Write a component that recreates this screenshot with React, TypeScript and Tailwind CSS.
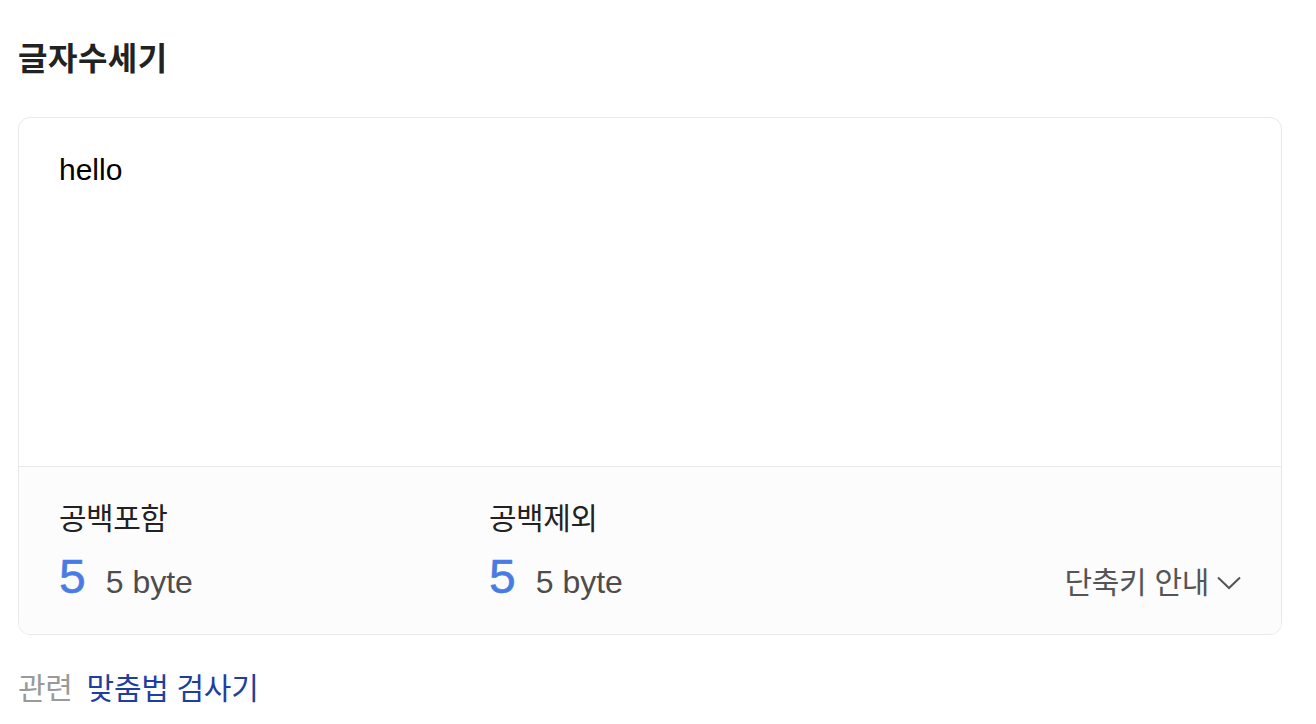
import { useState } from "react";

const font = "font-['Liberation_Sans','Noto_Sans_CJK_KR',sans-serif]";

type Stat = {
  label: string;
  count: number;
  bytes: number;
};

const StatBlock = ({ stat }: { stat: Stat }) => (
  <div className="w-[430px] flex flex-col">
    <div className="text-[30px] leading-[38px] tracking-[-0.5px] text-[#222]">
      {stat.label}
    </div>
    <div className="flex items-baseline mt-[15px]">
      <span className="text-[48px] leading-none text-[#4a7be3] [-webkit-text-stroke:0.6px_#4a7be3]">
        {stat.count}
      </span>
      <span className="ml-[20px] text-[32px] leading-none text-[#4d4d4d]">
        {stat.bytes} byte
      </span>
    </div>
  </div>
);

export default function App() {
  const [text, setText] = useState("hello");

  // 바이트 계산 (한글 2byte 기준)
  const bytesOf = (s: string) =>
    Array.from(s).reduce((n, c) => n + (c.charCodeAt(0) > 127 ? 2 : 1), 0);
  const noSpace = text.replace(/\s/g, "");

  const stats: Stat[] = [
    { label: "공백포함", count: text.length, bytes: bytesOf(text) },
    { label: "공백제외", count: noSpace.length, bytes: bytesOf(noSpace) },
  ];

  return (
    <div className={`min-h-screen bg-white pl-[18px] pr-[34px] pt-[43px] ${font}`}>
      <h1 className="text-[32px] leading-none font-bold tracking-[0.5px] text-[#222]">
        글자수세기
      </h1>

      <div className="mt-[42px] rounded-[12px] border border-[#e9e9e9] overflow-hidden">
        <div className="h-[348px] px-10 pt-[29px]">
          <textarea
            value={text}
            onChange={(e) => setText(e.target.value)}
            className={`w-full h-full resize-none outline-none bg-transparent text-[30px] leading-[45px] text-black ${font}`}
          />
        </div>

        <div className="h-[168px] border-t border-[#e9e9e9] bg-[#fcfcfc] px-10 pt-[33px] flex items-start">
          {stats.map((s) => (
            <StatBlock key={s.label} stat={s} />
          ))}
          <button className="ml-auto mt-[64px] flex items-center gap-[8px] text-[30px] leading-[38px] tracking-[-0.3px] text-[#555]">
            <span>단축키 안내</span>
            <svg width="24" height="14" viewBox="0 0 24 14" fill="none">
              <path d="M1 1.5 L12 12 L23 1.5" stroke="#555" strokeWidth="2" />
            </svg>
          </button>
        </div>
      </div>

      <div className="mt-[35px] flex items-center gap-[14px] text-[30px] leading-[38px] tracking-[-0.3px]">
        <span className="text-[#9a9a9a]">관련</span>
        <a className="text-[#1f3fa0]">맞춤법 검사기</a>
      </div>
    </div>
  );
}
